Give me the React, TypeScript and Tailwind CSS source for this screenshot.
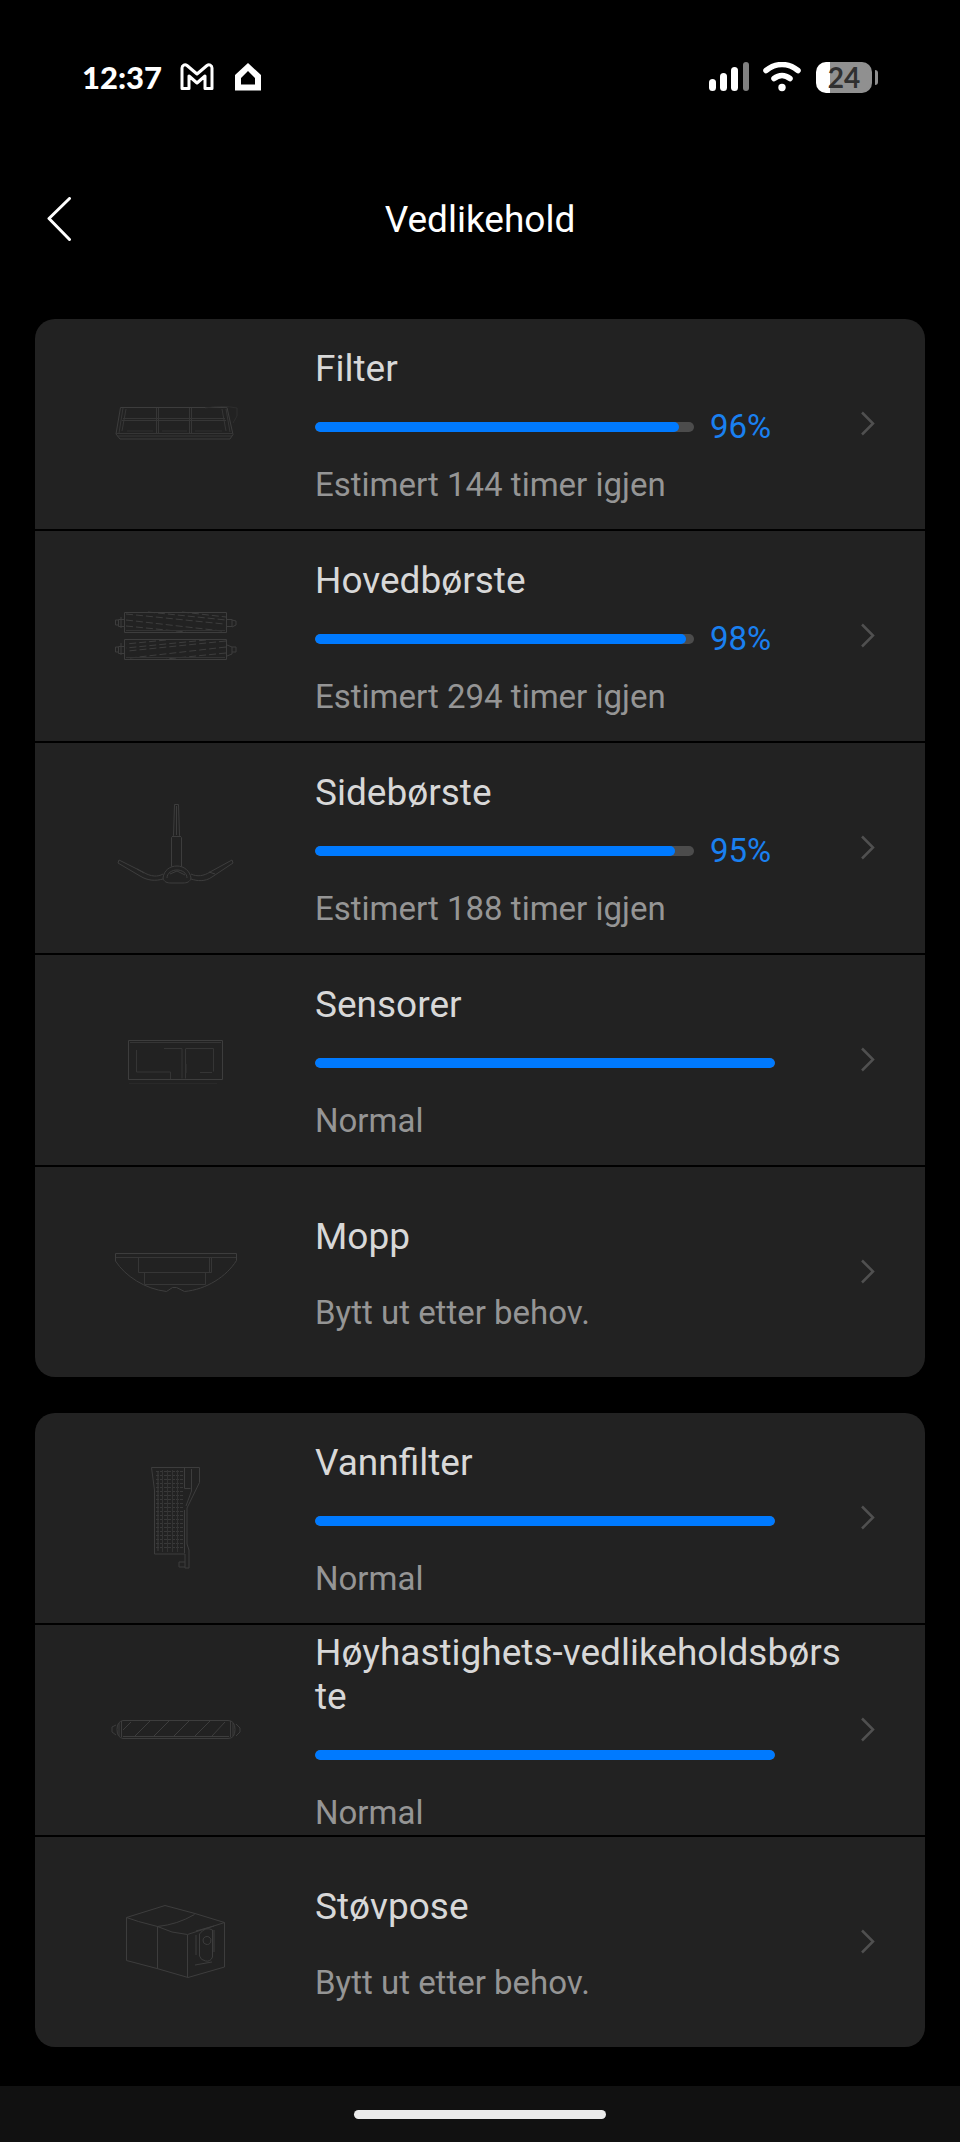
import type { ReactNode } from "react";

type Part = {
  name: string;
  status: string;
  level?: number;
  showPercent?: boolean;
  art: ReactNode;
};

function Art({ w, h, children }: { w: number; h: number; children: ReactNode }) {
  return (
    <svg
      width={w}
      height={h}
      viewBox={`0 0 ${w} ${h}`}
      fill="none"
      stroke="#3d3d3d"
      strokeWidth="1"
      aria-hidden="true"
    >
      {children}
    </svg>
  );
}

const filterArt = (
  <Art w={126} h={36}>
    <path d="M7.5 1.5H114l6 27-3 4.500H7l-4-5z" />
    <path d="M3 27.500h117M4 30h115M10 2 6 27M13 3 9 25M113 3l4 23M109 3l4 22M43.500 2v25M45.500 2v25M76.500 2v25M78.500 2v25M10 12.500h102M9 14.500h104" stroke="#363636" />
    <path d="M14 25h26M49 25h25M82 25h27M92 2q18-3 32 0v8l-4 7" stroke="#2e2e2e" />
  </Art>
);

const mainBrushArt = (
  <Art w={124} h={50}>
    <path d="M10.500 1.500h102v20h-102zM10.500 28.500h102v20h-102z" />
    <path d="M10 8.500H4.500v7H10M7 6v11M1.500 9h3v5h-3zM113 8.500h5v7h-5M118 9l4 1v4l-4 2M10 35.500H4.500v7H10M7 32v12M1.500 36h3v5h-3zM113 34l5 2v7l-5 2M118 36h4v5h-4" />
    <path d="m12 3 98 10M12 9l96 11M34 1l78 8M12 15l60 6M68 1l44 5M112 30 14 40M112 36 16 47M92 29l-80 8M112 42l-60 6M52 29l-40 4" strokeDasharray="7 3" />
    <path d="M12 19.500h99M12 46.500h99" stroke="#333" />
  </Art>
);

const sideBrushArt = (
  <Art w={118} h={92}>
    <path d="M57.500 2.500h4l1 31 2 2v29M57.500 2.500l-1 31-2 2v29M56 34.500h7M59.500 4v29" />
    <path d="M46 76c1-8 7-12 14-12s13 5 14 12c-1 4-4 5-8 5H54c-4 0-7-1-8-5zM50 76c0-5 5-8 10-8s10 3 10 8M53 72l7-3 8 4" />
    <path d="M46 72c-5 3-12 3-20-2L2 58l-1 3 22 13c8 5 16 5 23 3M74 72c6 3 13 2 19-2l22-12 1 3-21 14c-7 5-15 4-21 2M20 67l7 4M92 70l6 2" />
  </Art>
);

const sensorArt = (
  <Art w={96} h={48}>
    <path d="M.5 4.500h94v39H.5z" />
    <path d="M8.500 14v22h34v7M36 12.500h18v30M57.500 12.500v30M58 12.500h27.500v23M72 36.500h12M58 28v9M2 6.500h91" stroke="#353535" />
    <path d="M1 47.500h88" stroke="#292929" />
  </Art>
);

const mopArt = (
  <Art w={124} h={42}>
    <path d="M1.500 2.500h121v7c-10 16-30 29-52 31l-8-4h-4l-6 4C31 38 11 25 1.500 10z" />
    <path d="M2 6.500h120M24.500 7v14.500h73V7M95.500 7v14M30.500 22v11.500h61V22" stroke="#363636" />
  </Art>
);

const meshLines = Array.from({ length: 20 }, (_, i) => 5 + i * 4);

const waterFilterArt = (
  <Art w={52} h={104}>
    <path d="M1.500 1.500h48v15L37 42v36l2 6v18h-4V88H4.500V24z" />
    <path d="M34.500 2v20.500h6M41.500 3v22L36 40M34.500 44v43M35 96h-6v5h6M8 6v79" />
    {meshLines.map((y) => (
      <path key={y} d={`M6 ${y}.5h27`} strokeDasharray="3 1" stroke="#393939" />
    ))}
    <path d="M12.500 4v82M17.500 4v82M22.500 4v82M27.500 4v82" stroke="#333" />
  </Art>
);

const rollerArt = (
  <Art w={130} h={24}>
    <path d="M12 2.500h105q7 0 7 9t-7 9H12q-6-1-6-9t6-9z" />
    <path d="M10.500 3v16M8 5v13M5 7l-4 2v5l4 3M119.500 3v16M122 5v13M125 6l4 4v4l-4 4M12 18.500h106" />
    <path d="m24 18 15-15M43 18 58 3M63 18 78 3M84 18 99 3M101 18l13-14M12 12l8-8" />
  </Art>
);

const dustBagArt = (
  <Art w={102} h={76}>
    <path d="M1.500 13.500 40 1.500l30 8 29.500 9V63L63 73.500 32 64.500l-30.500-8z" />
    <path d="m1.500 13.500 12 4 19 5q20-2 37-12M32.500 22.500v42M32.500 22.500q14 7 30 8l37-12M62.500 31v42" />
    <path d="M74.500 30v22q1 4 6 5t7-4V26q-7-4-13 4zM71 31v20M89 26v22M78 36a4 4 0 1 0 6-3 4 4 0 0 0-6 3zM71 27l18-5M70 61l17-3" />
  </Art>
);

const robotParts: Part[] = [
  { name: "Filter", status: "Estimert 144 timer igjen", level: 96, showPercent: true, art: filterArt },
  { name: "Hovedbørste", status: "Estimert 294 timer igjen", level: 98, showPercent: true, art: mainBrushArt },
  { name: "Sidebørste", status: "Estimert 188 timer igjen", level: 95, showPercent: true, art: sideBrushArt },
  { name: "Sensorer", status: "Normal", level: 100, art: sensorArt },
  { name: "Mopp", status: "Bytt ut etter behov.", art: mopArt },
];

const dockParts: Part[] = [
  { name: "Vannfilter", status: "Normal", level: 100, art: waterFilterArt },
  { name: "Høyhastighets-vedlikeholdsbørste", status: "Normal", level: 100, art: rollerArt },
  { name: "Støvpose", status: "Bytt ut etter behov.", art: dustBagArt },
];

function PartRow({ part }: { part: Part }) {
  const hasLevel = part.level !== undefined;
  return (
    <li>
      <button
        type="button"
        className="flex min-h-[210px] w-full items-center bg-[#222222] pr-[50px] text-left"
      >
        <span className="flex w-[280px] shrink-0 justify-center pl-0.5">{part.art}</span>
        <span className="mr-3 flex min-w-0 flex-1 flex-col pt-1">
          <span className="text-[37px] leading-[44px] break-all text-[#d8d8d8]">{part.name}</span>
          {hasLevel && (
            <span className="mt-4 flex h-10 items-center gap-4 pr-[74px]">
              <span className="h-[10px] flex-1 overflow-hidden rounded-full bg-[#4c4c4c]">
                <span
                  className="block h-full rounded-full bg-[#007aff]"
                  style={{ width: `${part.level}%` }}
                />
              </span>
              {part.showPercent && (
                <span className="w-[65px] text-[33px] leading-10 text-[#1a80f0]">{part.level}%</span>
              )}
            </span>
          )}
          <span className={`text-[33px] leading-10 text-[#959595] ${hasLevel ? "mt-[18px]" : "mt-[34px]"}`}>
            {part.status}
          </span>
        </span>
        <svg width="14" height="26" viewBox="0 0 14 26" fill="none" stroke="#505050" strokeWidth="2.500" className="shrink-0" aria-hidden="true">
          <path d="m1 1.500 11 11-11 11" />
        </svg>
      </button>
    </li>
  );
}

function PartCard({ parts }: { parts: Part[] }) {
  return (
    <ul className="flex flex-col gap-0.5 overflow-hidden rounded-[20px]">
      {parts.map((part) => (
        <PartRow key={part.name} part={part} />
      ))}
    </ul>
  );
}

function StatusBar() {
  return (
    <div className="flex h-[154px] items-center justify-between px-[82px] text-white">
      <div className="flex items-center">
        <span className="font-[Lato,sans-serif] text-[31px] leading-10 font-black">12:37</span>
        <svg width="34" height="28" viewBox="0 0 34 28" fill="none" stroke="white" strokeWidth="3" strokeLinejoin="round" className="ml-[18px]" aria-hidden="true">
          <path d="M2 25.500V5c0-3 3-4 5-2.500L17 11l10-8.500C29 1 32 2 32 5v20.500h-7V13l-8 7-8-7v12.500z" />
        </svg>
        <svg width="28" height="28" viewBox="0 0 28 28" fill="white" className="ml-5" aria-hidden="true">
          <path fillRule="evenodd" d="M14 0 27 12v15.500H1V12zM14 8l-7 7v6.500h14V15z" />
        </svg>
      </div>
      <div className="flex items-center">
        <svg width="41" height="30" viewBox="0 0 41 30" fill="white" aria-hidden="true">
          <rect x="0" y="17" width="7" height="12" rx="3.500" />
          <rect x="11" y="11" width="7" height="18" rx="3.500" />
          <rect x="22" y="5" width="7" height="24" rx="3.500" />
          <rect x="34" y="0" width="6" height="29" rx="3" fill="#808080" />
        </svg>
        <svg width="40" height="30" viewBox="0 0 40 30" fill="none" stroke="white" strokeWidth="5.500" strokeLinecap="round" className="ml-3" aria-hidden="true">
          <path d="M4 8.500c10-8 22-8 32 0M12 16.500c5-4 11-4 16 0" />
          <circle cx="20" cy="25.500" r="3.700" fill="white" stroke="none" />
        </svg>
        <span className="ml-3.5 flex h-[31px] w-14 items-center justify-center rounded-[10px] bg-linear-to-r from-white from-25% to-[#909090] to-25% font-[Lato,sans-serif] text-[28px] leading-[31px] font-bold text-[#303030]">
          24
        </span>
        <span className="ml-[3px] h-[15px] w-[3px] rounded-r-full bg-[#909090]" />
      </div>
    </div>
  );
}

export default function App() {
  return (
    <div className="flex min-h-screen flex-col bg-black font-[Roboto,sans-serif]">
      <StatusBar />
      <header className="grid h-[131px] grid-cols-[1fr_auto_1fr] items-center px-[47px]">
        <button type="button" aria-label="Tilbake" className="justify-self-start">
          <svg width="26" height="46" viewBox="0 0 26 46" fill="none" stroke="white" strokeWidth="3" strokeLinecap="round" strokeLinejoin="round">
            <path d="M22.500 1.500 2 21.500l20.500 21" />
          </svg>
        </button>
        <h1 className="text-[37px] leading-[44px] text-white">Vedlikehold</h1>
      </header>
      <main className="flex flex-1 flex-col gap-9 px-[35px] pt-[34px] pb-[38px]">
        <PartCard parts={robotParts} />
        <PartCard parts={dockParts} />
      </main>
      <footer className="flex h-14 items-center justify-center bg-[#111111]">
        <span className="h-[9px] w-[252px] rounded-full bg-[#ebebeb]" />
      </footer>
    </div>
  );
}
